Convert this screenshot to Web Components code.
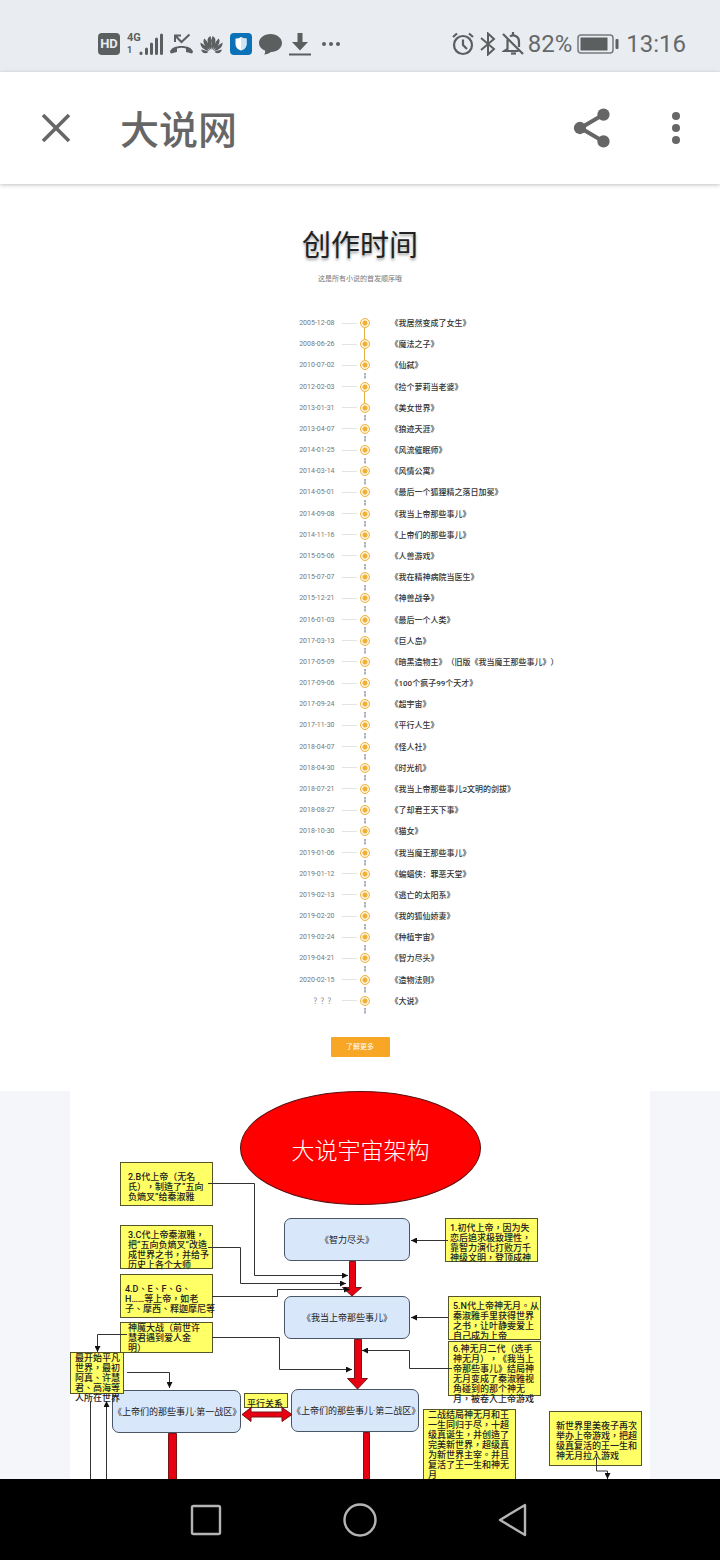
<!DOCTYPE html>
<html lang="zh-CN">
<head>
<meta charset="utf-8">
<meta name="viewport" content="width=device-width, initial-scale=1">
<title>大说网</title>
<style>
  html, body { margin: 0; height: 100%; background: #fff; }
  body {
    font-family: Roboto, "Noto Sans CJK SC", sans-serif;
    color: #333;
    text-spacing-trim: space-all;
  }
</style>
</head>
<body>
<phone-screen>
  <status-bar slot="status"></status-bar>
  <app-bar slot="bar">大说网</app-bar>
  <story-timeline heading="创作时间" note="这是所有小说的首发顺序哦" more="了解更多"></story-timeline>
  <universe-map></universe-map>
  <nav-bar slot="nav"></nav-bar>
</phone-screen>

<script>
const define = (name, html, setup) => customElements.define(name, class extends HTMLElement {
  connectedCallback() {
    if (this.shadowRoot) return;
    const root = this.attachShadow({ mode: 'open' });
    root.innerHTML = html.trim();
    if (setup) setup.call(this, root);
  }
});

define('phone-screen', `
<style>
  :host { display: flex; flex-direction: column; height: 100vh; background: #fff; }
  main { flex: 1; min-height: 0; display: flex; flex-direction: column; overflow-y: auto; scrollbar-width: none; }
</style>
<slot name="status"></slot>
<slot name="bar"></slot>
<main><slot></slot></main>
<slot name="nav"></slot>`);

define('status-bar', `
<style>
  :host { display: flex; align-items: center; justify-content: space-between; height: 72px; padding: 16px 34px 0 98px; box-sizing: border-box; background: #e9edf1; color: #5b5f60; }
  div { display: flex; align-items: center; }
  .left { gap: 7px; }
  .right { gap: 3px; font-size: 24px; line-height: 28px; font-weight: 400; color: #66696b; }
  svg { display: block; flex: none; }
  .hd { width: 22px; height: 22px; border-radius: 4px; background: #5b5f60; color: #e9edf1; font-size: 13px; font-weight: 700; line-height: 22px; text-align: center; }
  .cell { display: grid; grid-template-columns: 12px 24px; height: 24px; }
  .cell p { margin: 0; font-size: 11px; font-weight: 700; line-height: 12px; }
  .cell small { font-size: 9px; display: block; }
  .level { margin: 0 4px 0 2px; }
</style>
<div class="left">
  <span class="hd">HD</span>
  <span class="cell"><p>4G<small>1</small></p>
    <svg width="24" height="24" fill="none" stroke="#5b5f60" stroke-width="3" stroke-linecap="round"><path d="M2 21v.5M7.500 17v4.500M12.500 12v9.500M17.500 7v14.500M22.500 3v18.500"/></svg></span>
  <svg width="23" height="24" fill="none" stroke="#5b5f60" stroke-width="2"><path d="M5 10V3.500h6M5.500 4l6 6 8-7.500"/><path d="M0 20c1-8 22-8 23 0l-1 1.500-6-1.500v-3.500c-3-1-6-1-9 0V20l-6 1.500z" fill="#5b5f60" stroke="none"/></svg>
  <svg width="23" height="24" viewBox="0 0 23 24" fill="#5b5f60"><path d="M11 18C7 11 6 6 10.500 4 12 9 12 13 11 18zM12 18c4-7 5-12 .5-14-1.500 5-1.500 9-.5 14zM10 18.500C4 14 2 9 4.500 6.500 8 10 9.500 14 10 18.500zM13 18.500c6-4.500 8-9.500 5.500-12-3.500 3.500-5 7.500-5.500 12zM9 19C3 18 0 14 .5 10.500 5 13 7.500 16 9 19zM14 19c6-1 9-5 8.500-8.500-4.500 2.500-7 5.500-8.500 8.500zM8.500 20C5 22.500 2 21 1 17.500c3.500.5 5.500 1 7.500 2.500zM14.500 20c3.500 2.500 6.500 1 7.500-2.500-3.500.5-5.500 1-7.500 2.500z"/></svg>
  <svg width="22" height="22" viewBox="0 0 22 22"><rect width="22" height="22" rx="4" fill="#0b72b8"/><path d="M11 4c2 1.200 3.500 1.500 5.500 1.500V11c0 3.500-2.500 5.500-5.500 6.500-3-1-5.500-3-5.500-6.500V5.500C7.500 5.500 9 5.200 11 4z" fill="#fff"/><path d="M11 4c2 1.200 3.500 1.500 5.500 1.500V11c0 3.500-2.500 5.500-5.500 6.500z" fill="#cfe4f4"/></svg>
  <svg width="23" height="24" viewBox="0 0 23 24" fill="#5b5f60"><path d="M11.500 2C18 2 23 6 23 11S18 20 12 20c-2 1.500-4 2.500-7 2.500 1-1 1.500-2.500 1-4C2.500 17 0 14.500 0 11 0 6 5 2 11.500 2z"/></svg>
  <svg width="22" height="24" viewBox="0 0 22 24" fill="#5b5f60"><path d="M8.500 1h5v9H19l-8 8.500L3 10h5.500zM0 21.500h22v2H0z"/></svg>
  <svg width="22" height="24" viewBox="0 0 22 24" fill="#5b5f60"><circle cx="6" cy="12" r="2"/><circle cx="13" cy="12" r="2"/><circle cx="20" cy="12" r="2"/></svg>
</div>
<div class="right">
  <svg width="22" height="24" viewBox="0 0 22 24" fill="none" stroke="#5b5f60" stroke-width="2.200"><circle cx="11" cy="13" r="9"/><path d="M11 7.500V13l4 4M1 5l4-3.500M21 5l-4-3.500"/></svg>
  <svg width="22" height="24" viewBox="1 0 22 24" fill="none" stroke="#5b5f60" stroke-width="2"><path d="M5 6l13 11-6 5.500v-21L18 7 5 18"/></svg>
  <svg width="23" height="24" viewBox="0 0 23 24" fill="none" stroke="#5b5f60" stroke-width="2.200"><path d="M1 2l20 20M5.500 7.500V17l-3 2h14M8 4.500c3-2.500 9-.5 9 5V15M11 0v3"/><path d="M9 21.500h5"/></svg>
  <span>82%</span>
  <svg class="level" width="42" height="20" viewBox="0 0 42 20"><rect x="1" y="1" width="35" height="18" rx="3" fill="none" stroke="#777b7c" stroke-width="1.500"/><rect x="3.500" y="3.500" width="27" height="13" fill="#5b5f60"/><rect x="38.500" y="5" width="3" height="10" rx="1" fill="#5b5f60"/></svg>
  <time>13:16</time>
</div>`);

define('app-bar', `
<style>
  :host { display: flex; align-items: center; height: 112px; padding: 0 20px 0 32px; box-sizing: border-box; background: #fff; box-shadow: 0 1px 4px rgba(0,0,0,.25); position: relative; color: #666; }
  h1 { flex: 1; margin: 0 0 0 40px; padding-top: 6px; font-size: 39px; line-height: 48px; font-weight: 500; }
  button { width: 48px; height: 48px; padding: 0; border: 0; background: none; color: inherit; }
  button + button { margin-left: 36px; }
  svg { display: block; margin: auto; }
</style>
<button aria-label="关闭"><svg width="48" height="48" viewBox="0 0 48 48" stroke="currentColor" stroke-width="3.600"><path d="M11 11l26 26M37 11L11 37"/></svg></button>
<h1><slot></slot></h1>
<button aria-label="分享"><svg width="46" height="46" viewBox="0 0 24 24" fill="currentColor"><circle cx="18" cy="5" r="3.200"/><circle cx="5.700" cy="12" r="3.200"/><circle cx="18" cy="19" r="3.200"/><path d="M18 5L6 12l12 7" fill="none" stroke="currentColor" stroke-width="2.100"/></svg></button>
<button aria-label="更多"><svg width="48" height="48" viewBox="0 0 24 24" fill="currentColor"><circle cx="12" cy="6" r="2"/><circle cx="12" cy="12" r="2"/><circle cx="12" cy="18" r="2"/></svg></button>`);

define('timeline-entry', `
<style>
  :host { display: grid; grid-template-columns: 1fr 10px 1fr; padding-left: 9px; }
  .when { display: flex; justify-content: flex-end; height: 10px; align-items: center; gap: 7px; margin-right: 3px; font-size: 7px; line-height: 10px; color: #777; }
  .when::after { content: ""; width: 15px; height: 1px; background: #e3e3e3; }
  .rail { display: flex; flex-direction: column; align-items: center; }
  .dot { flex: none; box-sizing: border-box; width: 10px; height: 10px; border: 1px solid #efb03a; border-radius: 50%; background: radial-gradient(circle, #efb03a 0 2px, #fff4dc 3px); }
  .link { width: 2px; height: 6px; margin: auto; background: repeating-linear-gradient(#adb3be 0 2px, #d5d8df 2px 3px); }
  :host([solid]) .link { width: 1px; height: auto; flex: 1; margin: 0; background: #e0b040; }
  .name { padding-left: 21px; font-size: 8px; line-height: 12px; font-weight: 500; color: #333; white-space: nowrap; }
</style>
<span class="when"><time></time></span>
<span class="rail"><i class="dot"></i><i class="link"></i></span>
<span class="name"><slot></slot></span>`, function (root) {
  root.querySelector('time').textContent = this.getAttribute('date');
});

const STORIES = `2005-12-08|我居然变成了女生
2008-06-26|魔法之子
2010-07-02|仙弑
2012-02-03|捡个萝莉当老婆
2013-01-31|美女世界
2013-04-07|狼迹天涯
2014-01-25|风流催眠师
2014-03-14|风情公寓
2014-05-01|最后一个狐狸精之落日加冕
2014-09-08|我当上帝那些事儿
2014-11-16|上帝们的那些事儿
2015-05-06|人兽游戏
2015-07-07|我在精神病院当医生
2015-12-21|神兽战争
2016-01-03|最后一个人类
2017-03-13|巨人岛
2017-05-09|暗黑造物主|（旧版《我当魔王那些事儿》）
2017-09-06|100个疯子99个天才
2017-09-24|超宇宙
2017-11-30|平行人生
2018-04-07|怪人社
2018-04-30|时光机
2018-07-21|我当上帝那些事儿2文明的剑拔
2018-08-27|了却君王天下事
2018-10-30|猫女
2019-01-06|我当魔王那些事儿
2019-01-12|蝙蝠侠：罪恶天堂
2019-02-13|逃亡的太阳系
2019-02-20|我的狐仙娇妻
2019-02-24|种植宇宙
2019-04-21|智力尽头
2020-02-15|造物法则
？？？|大说`.split('\n').map(line => line.split('|'));
const SOLID = new Set(['2005-12-08', '2008-06-26', '2012-02-03']);

define('story-timeline', `
<style>
  :host { display: flex; flex-direction: column; align-items: center; padding: 42px 0 34px; background: #fff; }
  h2 { margin: 0; font-size: 29px; line-height: 40px; font-weight: 400; color: #222; text-shadow: 0 2px 3px rgba(0,0,0,.4); }
  p { margin: 7px 0 33px; font-size: 7px; line-height: 12px; color: #777; }
  .list { display: grid; grid-auto-rows: 1fr; height: 699px; width: 100%; }
  button { width: 59px; height: 20px; margin-top: 20px; padding: 0; border: 0; border-radius: 1px; background: #f7a626; color: #fff; font-family: inherit; font-size: 7px; line-height: 20px; }
</style>
<h2></h2><p></p>
<div class="list" role="list"></div>
<button></button>`, function (root) {
  root.querySelector('h2').textContent = this.getAttribute('heading');
  root.querySelector('p').textContent = this.getAttribute('note');
  root.querySelector('button').textContent = this.getAttribute('more');
  const list = root.querySelector('.list');
  for (const [date, name, extra = ''] of STORIES) {
    const entry = document.createElement('timeline-entry');
    entry.setAttribute('role', 'listitem');
    entry.setAttribute('date', date);
    entry.toggleAttribute('solid', SOLID.has(date));
    entry.textContent = `《${name}》${extra}`;
    list.append(entry);
  }
});

define('map-node', `
<style>
  :host { position: absolute; box-sizing: border-box; display: grid; place-items: center; width: 126px; height: 43px; border: 1px solid #4a5566; border-radius: 7px; background: #d9e7fb; font-size: 9px; line-height: 12px; color: #222; white-space: nowrap; }
</style><slot></slot>`);

define('map-note', `
<style>
  :host { position: absolute; box-sizing: border-box; width: 93px; height: 44px; border: 1px solid #55552a; background: #ffff66; font: 500 9px/10px Roboto, "Noto Sans CJK TC", sans-serif; color: #222; white-space: pre; padding: 4px 0 0 4px; }
</style><slot></slot>`, function () {
  // Traditional punctuation sits in the middle of its square.
  this.lang = 'zh-Hant';
});

define('universe-map', `
<style>
  :host { flex: 1; display: block; background: #f4f6fa; }
  .canvas { position: relative; width: 580px; max-width: 100%; height: 388px; margin: 0 auto; background: #fff; overflow: hidden; }
  h2 { position: absolute; left: 170px; top: 0; box-sizing: border-box; width: 241px; height: 114px; margin: 0; border: 1px solid #5a1010; border-radius: 50%; background: #f00; color: #fff; font: 300 23px/114px "Noto Sans CJK SC", sans-serif; text-align: center; }
  svg { position: absolute; left: 0; top: 0; }
</style>
<div class="canvas">
  <h2>大说宇宙架构</h2>
  <map-node style="left:214px;top:127px">《智力尽头》</map-node>
  <map-node style="left:214px;top:205px">《我当上帝那些事儿》</map-node>
  <map-node style="left:42px;top:299px;width:129px">《上帝们的那些事儿·第一战区》</map-node>
  <map-node style="left:221px;top:298px;width:128px">《上帝们的那些事儿·第二战区》</map-node>
  <map-note style="left:50px;top:71px;padding:9px 0 0 7px">2.B代上帝（无名
氏），制造了“五向
负熵叉”给秦淑雅</map-note>
  <map-note style="left:50px;top:134px;padding-left:7px">3.C代上帝秦淑雅，
把“五向负熵叉”改造
成世界之书，并给予
历史上各个大师</map-note>
  <map-note style="left:50px;top:183px;padding-top:9px">4.D、E、F、G、
H……等上帝，如老
子、摩西、释迦摩尼等</map-note>
  <map-note style="left:50px;top:231px;height:31px;padding:0 0 0 7px">神魔大战（前世许
慧君遇到爱人金
明）</map-note>
  <map-note style="left:0;top:261px;width:54px;height:42px;padding-top:0">最开始平凡
世界，最初
阿真、许慧
君、高海等
人所在世界</map-note>
  <map-note style="left:375px;top:127px">1.初代上帝，因为失
恋后追求极致理性，
靠智力演化打败万千
神级文明，登顶成神</map-note>
  <map-note style="left:378px;top:205px">5.N代上帝神无月。从
秦淑雅手里获得世界
之书，让叶静雯爱上
自己成为上帝</map-note>
  <map-note style="left:378px;top:250px;height:55px;padding-top:2px">6.神无月二代（选手
神无月），《我当上
帝那些事儿》结局神
无月变成了秦淑雅视
角碰到的那个神无
月，被卷入上帝游戏</map-note>
  <map-note style="left:353px;top:318px;height:84px;padding-top:0">二战结局神无月和王
一生同归于尽，十超
级真诞生，并创造了
完美新世界，超级真
为新世界主宰。并且
复活了王一生和神无
月</map-note>
  <map-note style="left:479px;top:320px;height:55px;padding:9px 0 0 6px">新世界里美夜子再次
举办上帝游戏，把超
级真复活的王一生和
神无月拉入游戏</map-note>
  <map-note style="left:174px;top:302px;width:44px;height:15px;padding:5px 0 0 2px">平行关系</map-note>
  <svg width="580" height="388" viewBox="0 0 580 388" fill="none">
    <defs><marker id="tip" viewBox="0 0 6 6" refX="6" refY="3" markerWidth="6" markerHeight="6" orient="auto"><path d="M0 0l6 3-6 3z" fill="#111"/></marker></defs>
    <g fill="#e60012" stroke="#7a1414">
      <path d="M279.500 170.500h6v26h6l-9.500 8.500-9.500-8.500h7z"/>
      <path d="M284.500 248.500h7v39h6l-10 10.500-10-10.500h7z"/>
      <path d="M172 323.500l9-7v4.500h31v-4.500l10 7-10 7v-4.500h-31v4.500z"/>
      <path d="M98.500 342.500h8V390h-8zM293.500 341.500h6V390h-6z"/>
    </g>
    <g stroke="#333">
      <path marker-end="url(#tip)" d="M138 92.500h46.500v92H278"/>
      <path marker-end="url(#tip)" d="M138 156.500h32.500v36H276"/>
      <path marker-end="url(#tip)" d="M142 205.500h65.500v-7H280"/>
      <path marker-end="url(#tip)" d="M142 246.500h67.500v32H282"/>
      <path marker-end="url(#tip)" d="M57 243.500H27.500V261"/>
      <path marker-end="url(#tip)" d="M57 281.500h42.500V297"/>
      <path marker-end="url(#tip)" d="M36.500 390v-80"/>
      <path d="M20.500 310v80"/>
      <path marker-end="url(#tip)" d="M378 149.500h-37"/>
      <path marker-end="url(#tip)" d="M378 226.500h-37"/>
      <path marker-end="url(#tip)" d="M382 277.500h-42.500v-18H292"/>
      <path marker-end="url(#tip)" d="M526.500 366v14h11v8"/>
    </g>
  </svg>
</div>`);

define('nav-bar', `
<style>
  :host { display: flex; flex: none; align-items: center; justify-content: center; gap: 106px; height: 81px; background: #000; }
  button { width: 48px; height: 48px; padding: 0; border: 0; background: none; }
  svg { display: block; margin: auto; }
</style>
<button aria-label="最近任务"><svg width="36" height="36" fill="none" stroke="#b4b4b4" stroke-width="2.400"><rect x="4" y="4" width="28" height="28" rx="1.500"/></svg></button>
<button aria-label="主屏幕"><svg width="36" height="36" fill="none" stroke="#b4b4b4" stroke-width="2.400"><circle cx="18" cy="18" r="15.500"/></svg></button>
<button aria-label="返回"><svg width="36" height="36" fill="none" stroke="#b4b4b4" stroke-width="2.400" stroke-linejoin="round"><path d="M4 18L29 3v30z"/></svg></button>`);
</script>
</body>
</html>
